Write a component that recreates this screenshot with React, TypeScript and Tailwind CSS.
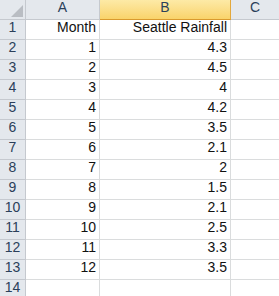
import React from "react";

const data: [number, string][] = [
  [1, "4.3"],
  [2, "4.5"],
  [3, "4"],
  [4, "4.2"],
  [5, "3.5"],
  [6, "2.1"],
  [7, "2"],
  [8, "1.5"],
  [9, "2.1"],
  [10, "2.5"],
  [11, "3.3"],
  [12, "3.5"],
];

const rowHead =
  "h-[20px] border-r border-b border-r-[#c5c9cf] border-b-[#c5c9cf] bg-[#e4e8ed] text-[#2b3f5a] flex items-end justify-center pb-[1px] text-[14px]";
const cell =
  "h-[20px] border-r border-b border-[#dadcdd] bg-white text-[#111] flex items-end justify-end pr-[3px] pb-[1px] text-[14px]";

export default function App() {
  const rows: { n: number; a: string; b: string }[] = [
    { n: 1, a: "Month", b: "Seattle Rainfall" },
    ...data.map(([m, r], i) => ({ n: i + 2, a: String(m), b: r })),
    { n: 14, a: "", b: "" },
  ];
  return (
    <div
      className="w-[279px] h-[296px] overflow-hidden bg-white"
      style={{ fontFamily: '"Liberation Sans", Arial, sans-serif' }}
    >
      <div className="grid grid-cols-[26px_74px_131px_1fr]">
        {/* header row */}
        <div className="relative h-[20px] border-r border-b border-[#c5c9cf] bg-[#e4e8ed]">
          <div className="absolute right-[2px] bottom-[2px] w-0 h-0 border-l-[12px] border-l-transparent border-b-[12px] border-b-[#b9bdc3]" />
        </div>
        <div className="h-[20px] border-r border-b border-[#c5c9cf] bg-[#e4e8ed] text-[#2b3f5a] flex items-end justify-center pb-[1px] text-[14px]">
          A
        </div>
        <div className="h-[20px] border-r border-b border-r-[#e3a83c] border-b-[#d99a2e] bg-gradient-to-b from-[#fdeaa6] to-[#f9d36a] text-[#2b3f5a] flex items-end justify-center pb-[1px] text-[14px]">
          B
        </div>
        <div className="h-[20px] border-b border-[#c5c9cf] bg-[#e4e8ed] text-[#2b3f5a] flex items-end justify-center pb-[1px] text-[14px]">
          C
        </div>
        {rows.map((r) => (
          <React.Fragment key={r.n}>
            <div className={rowHead}>{r.n}</div>
            <div className={cell}>{r.a}</div>
            <div className={cell}>{r.b}</div>
            <div className="h-[20px] border-b border-[#dadcdd] bg-white" />
          </React.Fragment>
        ))}
      </div>
    </div>
  );
}
